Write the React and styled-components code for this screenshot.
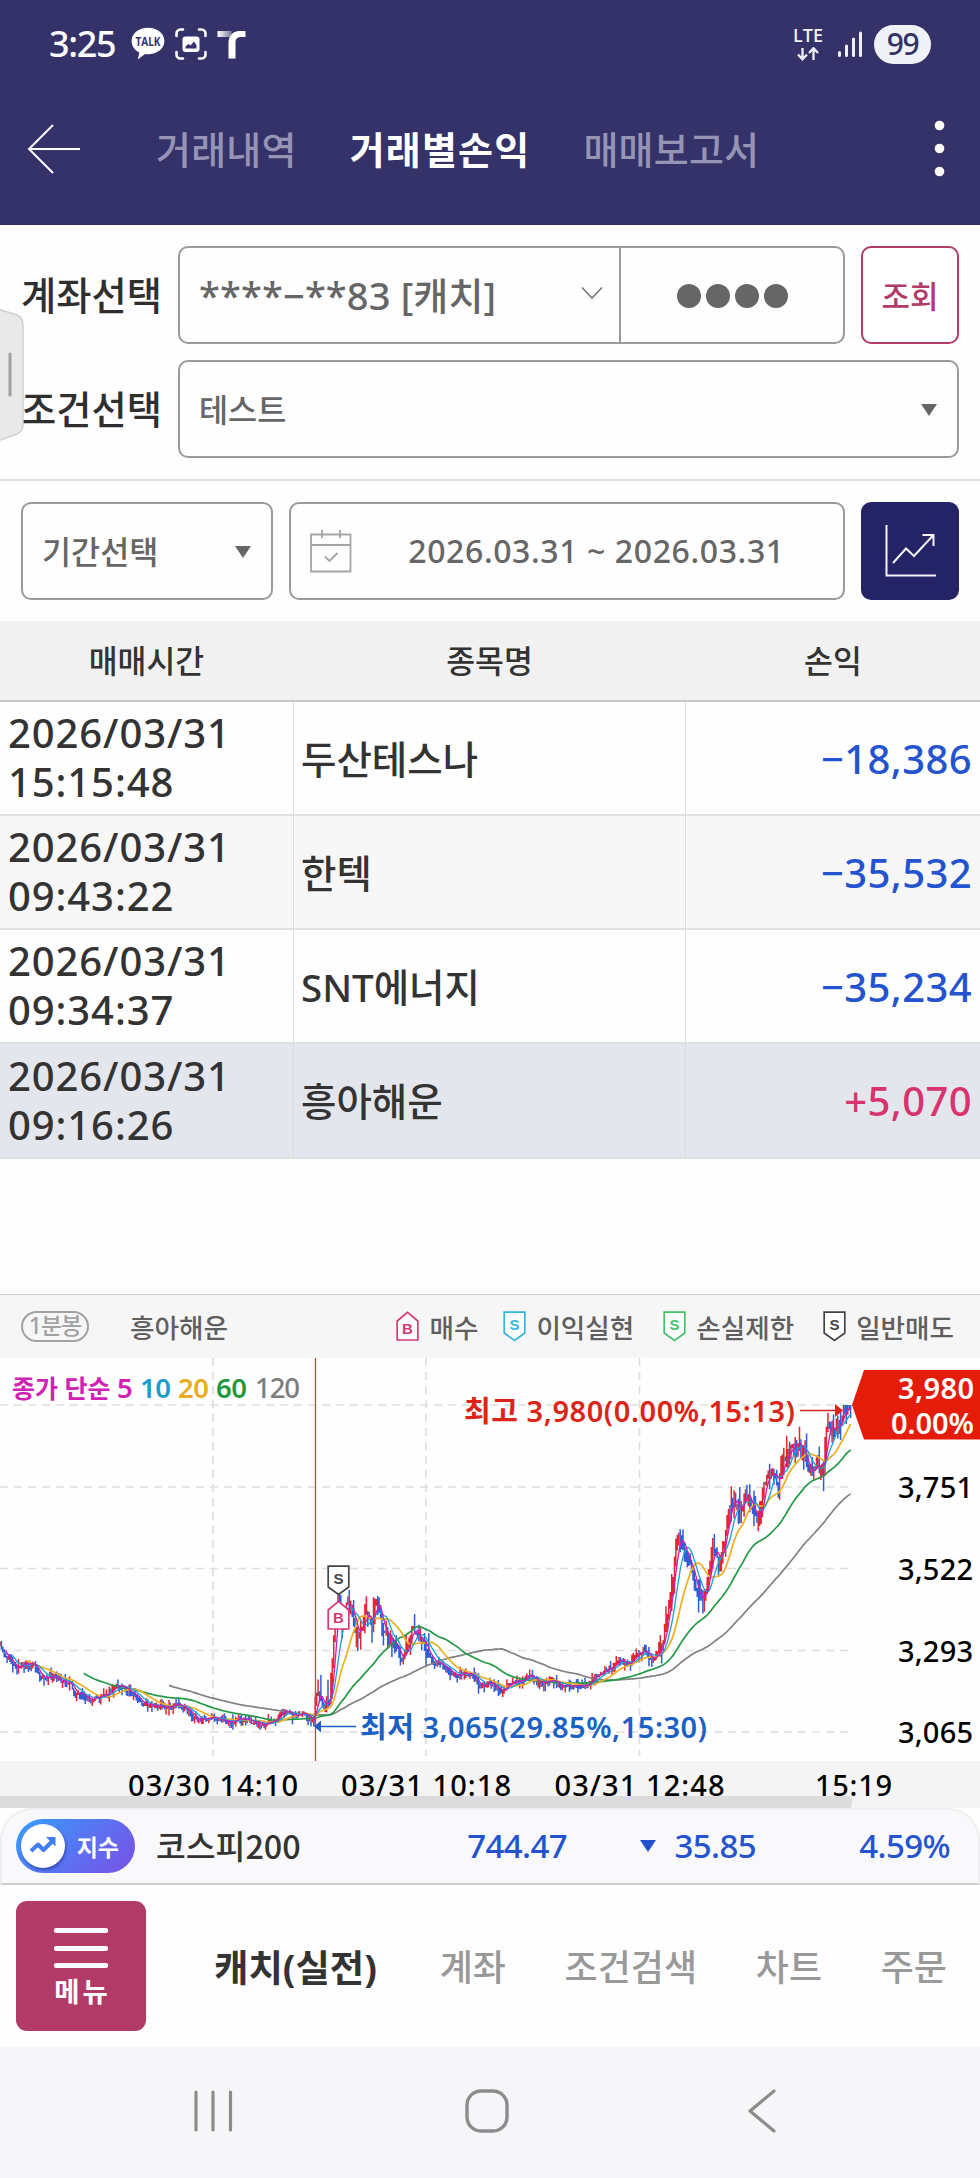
import React from "react";
import styled, { createGlobalStyle } from "styled-components";

const GlobalStyle = createGlobalStyle`
  * {
    box-sizing: border-box;
  }
  body {
    margin: 0;
    background: #fdfdfd;
    font-family: "Noto Sans", "Noto Sans CJK KR", sans-serif;
    color: #333;
  }
  svg {
    display: block;
    flex: none;
  }
`;

const Screen = styled.div`
  position: relative;
  width: 980px;
  height: 2178px;
  display: flex;
  flex-direction: column;
  overflow: hidden;
  background: #fefefe;
  white-space: nowrap;
`;

/* ---------- top ---------- */

const Top = styled.header`
  height: 225px;
  background: #343269;
  color: #fff;
`;

const StatusBar = styled.div`
  height: 88px;
  padding: 0 49px 0 49px;
  display: flex;
  align-items: center;
`;

const Clock = styled.span`
  width: 82px;
  font-size: 36px;
  font-weight: 500;
  line-height: 88px;
  letter-spacing: -1.3px;
`;

const StatusGroup = styled.div`
  display: flex;
  align-items: center;
  gap: ${p => p.$gap}px;
`;

const Spacer = styled.div`
  flex: 1;
`;

const Network = styled.div`
  width: 36px;
  padding-bottom: 5px;
  display: flex;
  flex-direction: column;
  align-items: center;
  color: #eef1f7;
  font: 600 18px/24px "Open Sans", sans-serif;
`;

const Battery = styled.span`
  width: 57px;
  height: 39px;
  border-radius: 20px;
  background: #eef1f7;
  color: #343269;
  font-size: 30px;
  font-weight: 500;
  line-height: 37px;
  text-align: center;
  letter-spacing: -1.5px;
`;

const TitleBar = styled.div`
  height: 122px;
  padding: 0 34px 0 27px;
  display: flex;
  align-items: center;
`;

const TopTabs = styled.nav`
  flex: 1;
  display: flex;
  align-items: center;
  gap: 53px;
  padding-left: 75px;
`;

const TopTab = styled.span`
  font-size: 38px;
  line-height: 50px;
  letter-spacing: ${p => (p.$active ? "1.2px" : "0.2px")};
  font-weight: ${p => (p.$active ? 700 : 500)};
  color: ${p => (p.$active ? "#fff" : "#9594b4")};
`;

/* ---------- form ---------- */

const Form = styled.section`
  height: 256px;
  padding: 21px 21px 0 21px;
  display: flex;
  flex-direction: column;
  gap: 16px;
  border-bottom: 2px solid #e2e2e2;
`;

const FormRow = styled.div`
  display: flex;
  align-items: center;
  height: 98px;
`;

const Label = styled.label`
  width: 157px;
  padding-bottom: 3px;
  font-size: 38.3px;
  font-weight: 500;
  color: #2f2f2f;
`;

const Box = styled.div`
  height: 98px;
  width: ${p => p.$width}px;
  border: 2px solid #9a9a9a;
  border-radius: 10px;
  display: flex;
  align-items: center;
  color: #666;
`;

const AccountSelect = styled.div`
  width: 441px;
  height: 94px;
  padding: 0 15px 4px 19px;
  display: flex;
  align-items: center;
  justify-content: space-between;
  border-right: 2px solid #9a9a9a;
  font-size: 38px;
  font-weight: 500;
  letter-spacing: 0.15px;
`;

const Password = styled.div`
  flex: 1;
  display: flex;
  justify-content: center;
  gap: 5px;
  padding-top: 2px;
`;

const Dot = styled.i`
  width: 24px;
  height: 24px;
  border-radius: 50%;
  background: #666;
`;

const SelectText = styled.span`
  flex: 1;
  padding: 0 0 2px 19px;
  font-size: 31.6px;
  font-weight: 500;
  color: #666;
`;

const Caret = styled.i`
  margin: 1px ${p => p.$right}px 0 0;
  border: 8px solid transparent;
  border-top: 12px solid ${p => p.$color || "#666"};
  border-bottom: 0;
`;

const SearchButton = styled.button`
  margin-left: 16px;
  width: 98px;
  height: 98px;
  padding: 0 0 2px;
  border: 2px solid #b23b68;
  border-radius: 10px;
  background: #fff;
  color: #b23b68;
  font: 500 31px "Noto Sans CJK KR", sans-serif;
`;

const PeriodRow = styled.div`
  height: 140px;
  padding: 21px 21px 0;
  display: flex;
  align-items: flex-start;
  gap: 16px;
`;

const DateText = styled.span`
  flex: 1;
  padding: 0 3px 1px 0;
  text-align: center;
  font-size: 32px;
  font-weight: 500;
  letter-spacing: 0.6px;
`;

const ChartButton = styled.button`
  width: 98px;
  height: 98px;
  padding: 0 0 0 24px;
  border: 0;
  border-radius: 10px;
  background: #232365;
`;

/* ---------- trade table ---------- */

const HeadRow = styled.div`
  height: 81px;
  display: grid;
  grid-template-columns: 293px 393px 294px;
  background: #f1f1f1;
  border-bottom: 2px solid #c9c9c9;
  font-size: 31.4px;
  font-weight: 500;
  line-height: 80px;
  text-align: center;
`;

const Row = styled.div`
  height: ${p => p.$height}px;
  display: grid;
  grid-template-columns: 294px 392px 294px;
  background: ${p => p.$bg};
  border-bottom: 2px solid #dfe0e3;
`;

const Cell = styled.div`
  display: flex;
  align-items: center;
  border-right: 1px solid #dcdde0;
  padding: 0 0 0 8px;
  font-size: 40px;
  font-weight: 500;
  line-height: 49px;
`;

const Stamp = styled(Cell)`
  padding-bottom: 2px;
  white-space: pre-line;
  letter-spacing: 0.9px;
`;

const Name = styled(Cell)`
  padding: 2px 0 0 7px;
  font-size: 38.5px;
`;

const Profit = styled(Cell)`
  justify-content: flex-end;
  padding: 0 8px 0 0;
  border-right: 0;
  letter-spacing: 0.4px;
  color: ${p => (p.$gain ? "#d9336f" : "#2453cf")};
`;

/* ---------- chart ---------- */

const Legend = styled.div`
  margin-top: 135px;
  height: 64px;
  padding: 0 26px 0 21px;
  display: flex;
  align-items: center;
  background: #f6f6f6;
  border-top: 1px solid #ccc;
  color: #5f5f5f;
  font-size: 26.6px;
  font-weight: 500;
`;

const Interval = styled.span`
  width: 68px;
  height: 31px;
  border: 2px solid #a2a2a2;
  border-radius: 16px;
  color: #a2a2a2;
  font-size: 23px;
  line-height: 25px;
  letter-spacing: -1px;
  text-align: center;
`;

const Stock = styled.span`
  margin-left: 41px;
  flex: 1;
`;

const LegendItem = styled.span`
  display: flex;
  align-items: center;
  gap: 10px;
  margin-left: ${p => p.$left || 29}px;
`;

/* ---------- bottom ---------- */

const IndexBar = styled.div`
  height: 77px;
  border: 2px solid #efeff2;
  border-bottom: 2px solid #cfcfd4;
  border-radius: 32px 32px 0 0;
  background: #f9f9fc;
  padding: 0 27px 2px 14px;
  display: flex;
  align-items: center;
  font-size: 33px;
  font-weight: 500;
`;

const IndexBadge = styled.span`
  width: 119px;
  height: 54px;
  padding: 0 16px 0 5px;
  border-radius: 27px;
  display: flex;
  align-items: center;
  justify-content: space-between;
  background: linear-gradient(135deg, #3d96fb 10%, #5f6df0 60%, #7a50e4 100%);
  color: #fff;
  font-size: 23px;
  font-weight: 700;
`;

const BadgeIcon = styled.span`
  width: 44px;
  height: 44px;
  border-radius: 50%;
  background: #fff;
  display: flex;
  align-items: center;
  justify-content: center;
  box-shadow: 1px 2px 3px rgba(20, 30, 120, 0.5);
`;

const IndexName = styled.span`
  margin-left: 21px;
  padding-bottom: 3px;
  width: 210px;
  font-family: "Noto Sans CJK KR", sans-serif;
  font-size: 32.4px;
`;

const Quote = styled.span`
  width: ${p => p.$width}px;
  display: flex;
  align-items: center;
  justify-content: flex-end;
  gap: 19px;
  color: #2453cf;
  letter-spacing: -0.6px;
`;

const MenuBar = styled.div`
  height: 162px;
  padding: 0 33px 0 16px;
  display: flex;
  align-items: center;
`;

const MenuButton = styled.button`
  width: 130px;
  height: 130px;
  padding: 27px 0 0;
  border: 0;
  border-radius: 11px;
  background: #b23a67;
  color: #fff;
  display: flex;
  flex-direction: column;
  align-items: center;
  gap: 12.5px;
`;

const MenuLine = styled.i`
  width: 54px;
  height: 5px;
  border-radius: 2px;
  background: #fff;
`;

const MenuCaption = styled.span`
  margin-top: -4px;
  padding-left: 3px;
  font: 700 27.5px/26px "Noto Sans CJK KR", sans-serif;
  letter-spacing: 3px;
`;

const MenuTabs = styled.nav`
  flex: 1;
  padding: 4px 0 0 68px;
  display: flex;
  align-items: center;
  justify-content: space-between;
`;

const MenuTab = styled.span`
  margin-right: ${p => (p.$active ? 4 : 0)}px;
  font-size: ${p => (p.$active ? 37.4 : 36)}px;
  line-height: 48px;
  font-weight: ${p => (p.$active ? 700 : 500)};
  color: ${p => (p.$active ? "#333" : "#999")};
`;

const SystemNav = styled.div`
  flex: 1;
  background: #f6f6f8;
  padding: 41px 203px 0 193px;
  display: flex;
  justify-content: space-between;
`;

const HomeKey = styled.div`
  margin-right: 7px;
`;

const SideHandle = styled.div`
  position: absolute;
  left: 0;
  top: 308px;
`;

const FONT = '"Noto Sans", "Noto Sans CJK KR", sans-serif';

const trades = [
  { time: "2026/03/31\n15:15:48", name: "두산테스나", profit: "−18,386", bg: "#fefefe", height: 114 },
  { time: "2026/03/31\n09:43:22", name: "한텍", profit: "−35,532", bg: "#f7f7f7", height: 114 },
  { time: "2026/03/31\n09:34:37", name: "SNT에너지", profit: "−35,234", bg: "#fefefe", height: 114 },
  { time: "2026/03/31\n09:16:26", name: "흥아해운", profit: "+5,070", bg: "#e4e6ed", height: 115, gain: true },
];

// turning points of the price line, x / y in chart units
const points = [
  [0, 1645], [5, 1655], [17, 1668], [25, 1663], [35, 1665], [40, 1677], [50, 1677], [70, 1683],
  [75, 1693], [90, 1699], [105, 1695], [118, 1685], [133, 1693], [142, 1703], [167, 1707],
  [180, 1704], [197, 1720], [213, 1717], [230, 1722], [240, 1718], [263, 1725], [277, 1720],
  [280, 1710], [293, 1715], [303, 1713], [314, 1722], [316, 1690], [322, 1703], [330, 1703],
  [333, 1643], [338, 1600], [343, 1623], [347, 1600], [352, 1613], [358, 1640], [367, 1612],
  [372, 1623], [376, 1596], [382, 1625], [390, 1640], [402, 1657], [413, 1628], [422, 1642],
  [433, 1660], [457, 1675], [470, 1673], [480, 1686], [491, 1682], [501, 1692], [510, 1684],
  [530, 1676], [542, 1683], [553, 1680], [563, 1686], [587, 1686], [593, 1675], [608, 1670],
  [618, 1660], [630, 1665], [635, 1655], [643, 1650], [653, 1660], [662, 1643], [667, 1617],
  [673, 1580], [677, 1538], [680, 1540], [687, 1557], [692, 1572], [697, 1590], [703, 1600],
  [708, 1580], [713, 1547], [720, 1563], [727, 1520], [733, 1497], [740, 1513], [745, 1488],
  [752, 1508], [759, 1523], [763, 1487], [772, 1470], [778, 1487], [785, 1457], [797, 1441],
  [805, 1453], [810, 1477], [817, 1467], [823, 1470], [827, 1427], [838, 1427], [843, 1413],
  [851, 1407],
];

const STEP = 1.42;

function buildBars() {
  let seed = 11;
  const rnd = () => {
    seed = (seed * 16807) % 2147483647;
    return seed / 2147483647;
  };
  const bars = [];
  let k = 0;
  let prev = points[0][1];
  for (let x = 0; x <= 851; x += STEP) {
    while (k < points.length - 2 && points[k + 1][0] < x) k++;
    const [x0, y0] = points[k];
    const [x1, y1] = points[k + 1];
    const amp = x < 316 ? 4 : x < 430 ? 10 : x < 660 ? 4.5 : 11;
    const close = y0 + ((y1 - y0) * (x - x0)) / (x1 - x0) + (rnd() - 0.5) * amp;
    const wick = amp * 0.9;
    bars.push({
      x,
      open: prev,
      close,
      high: Math.max(1405, Math.min(prev, close) - rnd() * rnd() * wick * 2.4),
      low: Math.max(prev, close) + rnd() * rnd() * wick * 2.4,
    });
    prev = close;
  }
  return bars;
}

function average(bars, n) {
  let d = "";
  let sum = 0;
  bars.forEach((b, i) => {
    sum += b.close;
    if (i >= n) sum -= bars[i - n].close;
    if (i >= n - 1) d += `${d ? "L" : "M"}${b.x.toFixed(1)} ${(sum / n).toFixed(1)}`;
  });
  return d;
}

const bars = buildBars();
const averages = [
  { n: 120, color: "#808080" },
  { n: 60, color: "#229a45" },
  { n: 20, color: "#eeaf22" },
  { n: 10, color: "#1d9fd6" },
  { n: 5, color: "#c81fb4" },
];

const wicks = up =>
  bars
    .filter(b => b.close <= b.open === up)
    .map(b => `M${b.x.toFixed(1)} ${b.high.toFixed(1)}V${(b.low + 1).toFixed(1)}`)
    .join("");

function Flag({ x = 0, y = 0, color, letter, up }) {
  return (
    <g transform={`translate(${x} ${y})`}>
      <path
        d={up ? "M1.2 10 11.5 1.4 21.8 10V29H1.2Z" : "M1.2 1.2H21.8V22L11.5 29.4 1.2 22Z"}
        fill="#fff"
        stroke={color}
        strokeWidth="1.7"
      />
      <text
        x="11.5"
        y={up ? 22.5 : 19}
        fontFamily="Liberation Sans"
        fontWeight="700"
        fontSize="15"
        textAnchor="middle"
        fill={color}
      >
        {letter}
      </text>
    </g>
  );
}

const FlagIcon = props => (
  <svg width="23" height="31">
    <Flag {...props} />
  </svg>
);

function PriceChart() {
  return (
    <svg width="980" height="450" viewBox="0 1358 980 450" fontFamily={FONT} fontSize="29" fontWeight="500">
      <rect y="1761" width="980" height="47" fill="#f4f4f4" />
      <g stroke="#dedede" strokeWidth="1.6" strokeDasharray="8 6">
        {[1405, 1487, 1568.5, 1650.5, 1732].map(y => (
          <path key={y} d={`M0 ${y}H852`} />
        ))}
        {[213, 426, 639.5].map(x => (
          <path key={x} d={`M${x} 1358V1756`} />
        ))}
      </g>
      <g fill="none">
        <path d={wicks(true)} stroke="#e3262f" strokeWidth="1.5" />
        <path d={wicks(false)} stroke="#2f5fd6" strokeWidth="1.5" />
        {averages.map(a => (
          <path key={a.n} d={average(bars, a.n)} stroke={a.color} strokeWidth={a.n < 20 ? 1.3 : 1.7} />
        ))}
      </g>
      <path d="M315.5 1358V1761" stroke="#d0403c" strokeWidth="1.3" />

      <g fontSize="27.5" fontWeight="600">
        <text x="12" y="1398" fill="#d022b4" fontSize="25">종가</text>
        <text x="64.5" y="1398" fill="#d022b4" fontSize="25">단순</text>
        <text x="117" y="1398" fill="#d022b4">5</text>
        <text x="140" y="1398" fill="#1a9ccf" textLength="31">10</text>
        <text x="178" y="1398" fill="#e8ab22" textLength="31">20</text>
        <text x="216" y="1398" fill="#1f9a40" textLength="31">60</text>
        <text x="255" y="1398" fill="#7d7d7d" fontWeight="500" textLength="45">120</text>
      </g>

      <text x="464" y="1422" fill="#dc2418" fontWeight="600" textLength="331">최고 3,980(0.00%,15:13)</text>
      <path d="M800 1410.5H836" stroke="#dc2418" strokeWidth="1.3" />
      <path d="M835 1404 843 1410.5 835 1417Z" fill="#dc2418" />

      <text x="360" y="1738" fill="#1b60c4" fontWeight="600" textLength="347">최저 3,065(29.85%,15:30)</text>
      <path d="M320 1726.5H356" stroke="#1b60c4" strokeWidth="1.3" />
      <path d="M321 1720.5 314 1726.5 321 1732.5Z" fill="#1b60c4" />

      <Flag x={327} y={1565} color="#444" letter="S" />
      <Flag x={327} y={1600} color="#d63a76" letter="B" up />

      <path d="M852 1405 864 1370H980V1439.5H864Z" fill="#e61c0b" />
      <g fill="#fff" fontWeight="600" textAnchor="end">
        <text x="974" y="1398.5" textLength="76">3,980</text>
        <text x="974" y="1434" textLength="83">0.00%</text>
      </g>
      <g fill="#000" textAnchor="end">
        <text x="973" y="1498" textLength="75">3,751</text>
        <text x="973" y="1580" textLength="75">3,522</text>
        <text x="973" y="1661.5" textLength="75">3,293</text>
        <text x="973" y="1743" textLength="75">3,065</text>
      </g>

      <rect x="-6" y="1796" width="858" height="12" rx="3" fill="#dcdcdc" />
      <g fill="#000" textAnchor="middle">
        <text x="213" y="1795.5" textLength="170">03/30 14:10</text>
        <text x="426" y="1795.5" textLength="170">03/31 10:18</text>
        <text x="639.5" y="1795.5" textLength="170">03/31 12:48</text>
        <text x="853.5" y="1795.5" textLength="77">15:19</text>
      </g>
    </svg>
  );
}

function TalkIcon() {
  return (
    <svg width="34" height="34" viewBox="0 0 34 34">
      <path d="M17 .8C7.8.8.6 6.6.6 14c0 5 3.1 9.2 7.7 11.5L6.8 32.6 14 27.1c1 .1 2 .2 3 .2 9.2 0 16.4-5.9 16.4-13.3S26.2.8 17 .8Z" fill="#fff" />
      <text x="17" y="18.5" fontFamily="Open Sans, sans-serif" fontSize="12" fontWeight="700" textAnchor="middle" textLength="25" lengthAdjust="spacingAndGlyphs" fill="#343269">TALK</text>
    </svg>
  );
}

function CaptureIcon() {
  return (
    <svg width="32" height="32" viewBox="0 0 32 32" fill="none" stroke="#fff" strokeWidth="2.6" strokeLinecap="round">
      <path d="M1.5 8V5.5a4 4 0 0 1 4-4H8M24 1.5h2.5a4 4 0 0 1 4 4V8M30.5 24v2.5a4 4 0 0 1-4 4H24M8 30.5H5.5a4 4 0 0 1-4-4V24" />
      <rect x="7.5" y="8.5" width="17" height="15.5" rx="3" fill="#fff" stroke="none" />
      <path d="M10.5 20.5v-2l3-2.5 2 1.5 3.5-4 2.5 3.5v3.500Z" fill="#343269" stroke="none" />
    </svg>
  );
}

// carrier mark
function CarrierIcon() {
  return (
    <svg width="29" height="29" viewBox="0 0 29 29">
      <defs>
        <linearGradient id="fade" x1="0" x2="1">
          <stop offset="0" stopColor="#fff" />
          <stop offset="1" stopColor="#fff" stopOpacity="0.35" />
        </linearGradient>
      </defs>
      <rect x="0.5" y="1" width="14" height="6" fill="url(#fade)" />
      <path d="M28.5 1v6h-4c-4.5 0-6 2-6 6v15.5h-7V13c0-7 4-12 11-12Z" fill="#fff" />
    </svg>
  );
}

function App() {
  return (
    <>
      <GlobalStyle />
      <Screen>
        <Top>
          <StatusBar>
            <Clock>3:25</Clock>
            <StatusGroup $gap={10}>
              <TalkIcon />
              <CaptureIcon />
              <CarrierIcon />
            </StatusGroup>
            <Spacer />
            <StatusGroup $gap={11}>
              <Network>
                LTE
                <svg width="30" height="14" viewBox="0 17 30 14" fill="none" stroke="#eef1f7" strokeWidth="2.3">
                  <path d="M9.5 18V29M5 24.5l4.5 4.8 4.5-4.8M20.5 30V18.5M16 23l4.5-4.8L25 23" />
                </svg>
              </Network>
              <svg width="26" height="28" viewBox="0 0 26 28" fill="none" stroke="#eef1f7" strokeWidth="3" strokeLinecap="round">
                <path d="M2.5 22.5V25.5M9.5 16V25.5M16.5 9V25.5M23.5 3V25.5" />
              </svg>
              <Battery>99</Battery>
            </StatusGroup>
          </StatusBar>
          <TitleBar>
            <svg width="54" height="50" viewBox="0 0 54 50" fill="none" stroke="#fff" strokeWidth="2">
              <path d="M26 1 2 25 26 49M2 25H53" />
            </svg>
            <TopTabs>
              <TopTab>거래내역</TopTab>
              <TopTab $active>거래별손익</TopTab>
              <TopTab>매매보고서</TopTab>
            </TopTabs>
            <svg width="12" height="58" fill="#fff">
              <circle cx="5.5" cy="5.5" r="4.8" />
              <circle cx="5.5" cy="28.5" r="4.8" />
              <circle cx="5.5" cy="51.5" r="4.8" />
            </svg>
          </TitleBar>
        </Top>

        <Form>
          <FormRow>
            <Label>계좌선택</Label>
            <Box $width={667}>
              <AccountSelect>
                ****−**83 [캐치]
                <svg width="24" height="14" viewBox="0 0 24 14" fill="none" stroke="#777" strokeWidth="1.6">
                  <path d="M2 1.5 12 12 22 1.5" />
                </svg>
              </AccountSelect>
              <Password>
                <Dot />
                <Dot />
                <Dot />
                <Dot />
              </Password>
            </Box>
            <SearchButton>조회</SearchButton>
          </FormRow>
          <FormRow>
            <Label>조건선택</Label>
            <Box $width={781}>
              <SelectText>테스트</SelectText>
              <Caret $right={20} />
            </Box>
          </FormRow>
        </Form>

        <PeriodRow>
          <Box $width={252}>
            <SelectText>기간선택</SelectText>
            <Caret $right={20} />
          </Box>
          <Box $width={556}>
            <svg width="62" height="44" viewBox="0 0 62 44" fill="none" stroke="#a5a5a5" strokeWidth="1.8">
              <path d="M20 5.5H59.5V42.5H20ZM20 16H59.5M31 1V9M49 1V9" />
              <path d="M34 27.5 38.5 32 46.5 24" />
            </svg>
            <DateText>2026.03.31 ~ 2026.03.31</DateText>
          </Box>
          <ChartButton>
            <svg width="52" height="52" viewBox="0 0 52 52" fill="none" stroke="#f4f4fa" strokeWidth="2">
              <path d="M1.5 0V50.5H51M8 38 21 23.5 29 31 47.5 11M37.5 10H48.5V21" />
            </svg>
          </ChartButton>
        </PeriodRow>

        <HeadRow>
          <span>매매시간</span>
          <span>종목명</span>
          <span>손익</span>
        </HeadRow>
        {trades.map(t => (
          <Row key={t.time} $bg={t.bg} $height={t.height}>
            <Stamp>{t.time}</Stamp>
            <Name>{t.name}</Name>
            <Profit $gain={t.gain}>{t.profit}</Profit>
          </Row>
        ))}

        <Legend>
          <Interval>1분봉</Interval>
          <Stock>흥아해운</Stock>
          <LegendItem>
            <FlagIcon color="#d63a76" letter="B" up />
            매수
          </LegendItem>
          <LegendItem $left={25}>
            <FlagIcon color="#35b4e0" letter="S" />
            이익실현
          </LegendItem>
          <LegendItem>
            <FlagIcon color="#45c06b" letter="S" />
            손실제한
          </LegendItem>
          <LegendItem>
            <FlagIcon color="#444" letter="S" />
            일반매도
          </LegendItem>
        </Legend>
        <PriceChart />

        <IndexBar>
          <IndexBadge>
            <BadgeIcon>
              <svg width="28" height="20" viewBox="0 0 28 20" fill="none" stroke="#3f7df0" strokeWidth="4" strokeLinejoin="round">
                <path d="M2 15 9 8.5 14.5 14 23.5 5" />
                <path d="M17 1H26.5V10.5Z" fill="#3f7df0" stroke="none" />
              </svg>
            </BadgeIcon>
            지수
          </IndexBadge>
          <IndexName>코스피200</IndexName>
          <Quote $width={201}>744.47</Quote>
          <Quote $width={189}>
            <Caret $right={0} $color="#2453cf" />
            35.85
          </Quote>
          <Quote $width={194}>4.59%</Quote>
        </IndexBar>

        <MenuBar>
          <MenuButton>
            <MenuLine />
            <MenuLine />
            <MenuLine />
            <MenuCaption>메뉴</MenuCaption>
          </MenuButton>
          <MenuTabs>
            <MenuTab $active>캐치(실전)</MenuTab>
            <MenuTab>계좌</MenuTab>
            <MenuTab>조건검색</MenuTab>
            <MenuTab>차트</MenuTab>
            <MenuTab>주문</MenuTab>
          </MenuTabs>
        </MenuBar>

        <SystemNav>
          <svg width="41" height="46" viewBox="0 0 41 46" stroke="#8c8c8e" strokeWidth="3.2" strokeLinecap="round">
            <path d="M3 4V42M20 4V42M37.5 4V42" />
          </svg>
          <HomeKey>
            <svg width="46" height="46" viewBox="0 0 46 46" fill="none" stroke="#8c8c8e" strokeWidth="3.4">
              <rect x="3" y="3" width="40" height="40" rx="14" />
            </svg>
          </HomeKey>
          <svg width="30" height="46" viewBox="0 0 30 46" fill="none" stroke="#8c8c8e" strokeWidth="3.2" strokeLinecap="round" strokeLinejoin="round">
            <path d="M27 3 3 23 27 43" />
          </svg>
        </SystemNav>

        <SideHandle>
          <svg width="25" height="134" viewBox="0 0 25 134">
            <path d="M-2 1 17 7Q23 10 23 17V117Q23 123 17 126L-2 133Z" fill="#e9e9e9" stroke="#d0d0d0" strokeWidth="1.5" />
            <path d="M10 46V87" stroke="#a0a0a0" strokeWidth="3" strokeLinecap="round" />
          </svg>
        </SideHandle>
      </Screen>
    </>
  );
}

export default App;
